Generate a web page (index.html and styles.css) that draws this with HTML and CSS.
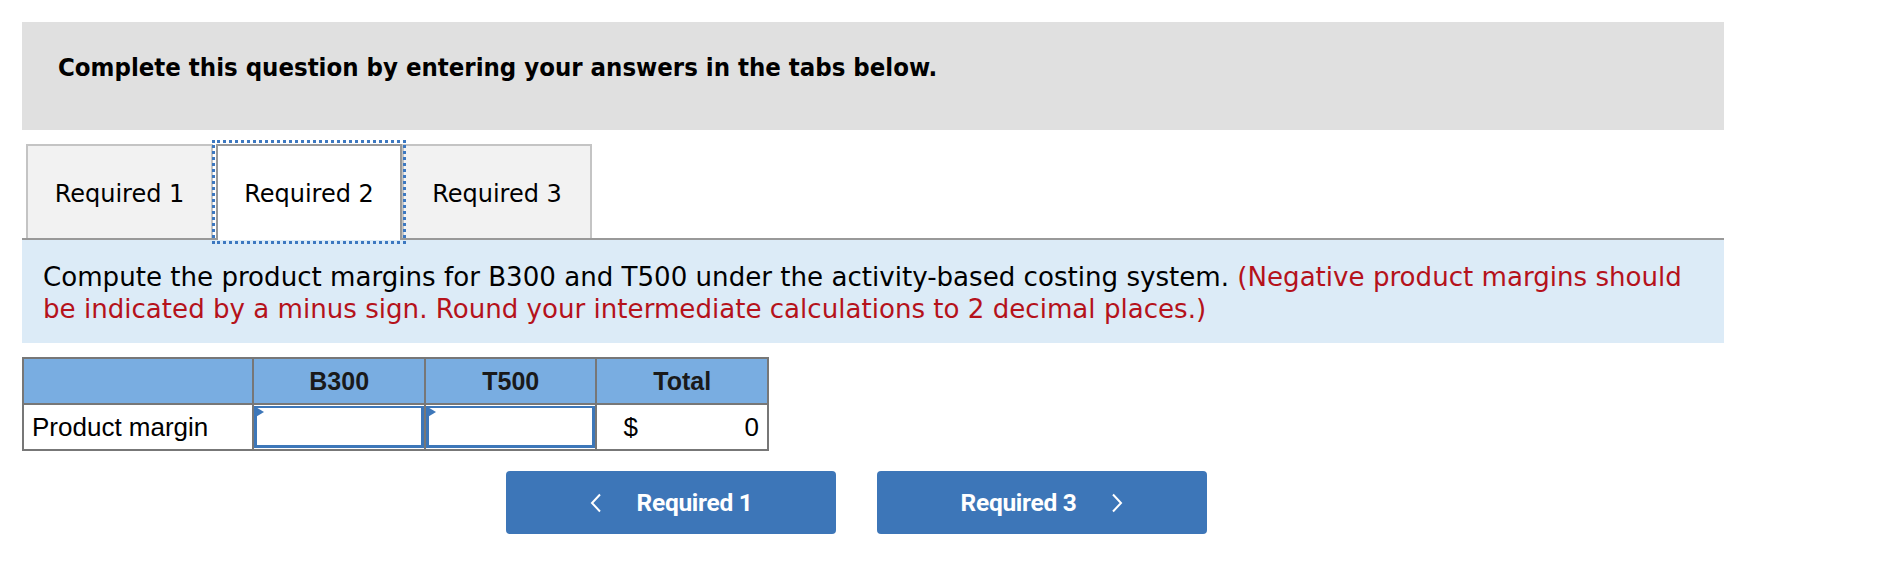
FILE: index.html
```html
<!DOCTYPE html>
<html lang="en">
<head>
<meta charset="utf-8">
<title>Required 2</title>
<link rel="stylesheet" href="styles.css">
</head>
<body>
<div class="wrap">
  <div class="banner">
    <h1 class="banner-title">Complete this question by entering your answers in the tabs below.</h1>
  </div>

  <div class="tabs">
    <div class="tab">Required 1</div>
    <div class="tab tab-active">Required 2</div>
    <div class="tab tab-last">Required 3</div>
  </div>

  <div class="prompt">
    <p class="prompt-text">Compute the product margins for B300 and T500 under the activity-based costing system. <span class="note">(Negative product margins should be indicated by a minus sign. Round your intermediate calculations to 2 decimal places.)</span></p>
  </div>

  <table class="grid">
    <thead>
      <tr>
        <th class="col-label"></th>
        <th class="col-val">B300</th>
        <th class="col-val">T500</th>
        <th class="col-val">Total</th>
      </tr>
    </thead>
    <tbody>
      <tr>
        <td class="row-label">Product margin</td>
        <td class="cell-input"><div class="input"><span class="flag"></span></div></td>
        <td class="cell-input"><div class="input"><span class="flag"></span></div></td>
        <td class="cell-total"><span class="cur">$</span><span class="num">0</span></td>
      </tr>
    </tbody>
  </table>

  <div class="nav">
    <button class="nav-btn">
      <svg class="chev" width="12" height="20" viewBox="0 0 12 20"><polyline points="10,1.5 2,10 10,18.5" fill="none" stroke="#fff" stroke-width="2"/></svg>
      <span class="nav-label">Required 1</span>
    </button>
    <button class="nav-btn">
      <span class="nav-label">Required 3</span>
      <svg class="chev" width="12" height="20" viewBox="0 0 12 20"><polyline points="2,1.5 10,10 2,18.5" fill="none" stroke="#fff" stroke-width="2"/></svg>
    </button>
  </div>
</div>
</body>
</html>
```

FILE: styles.css
```css
* { box-sizing: border-box; }

html, body {
  margin: 0;
  padding: 0;
  background: #ffffff;
}

.wrap {
  margin: 22px 0 0 22px;
  width: 1702px;
}

.banner {
  height: 108px;
  background: #e0e0e0;
  padding: 30px 0 0 36px;
}

.banner-title {
  margin: 0;
  font-family: "DejaVu Sans Condensed", "DejaVu Sans", sans-serif;
  font-weight: bold;
  font-size: 25.5px;
  line-height: 30px;
  color: #000;
}

.tabs {
  margin-top: 14px;
  display: flex;
  padding-left: 4px;
  border-bottom: 2px solid #999999;
  height: 96px;
}

.tab {
  width: 187px;
  height: 94px;
  background: #f2f2f2;
  border: 2px solid #c4c4c4;
  border-bottom: none;
  display: flex;
  align-items: center;
  justify-content: center;
  font-family: "DejaVu Sans", sans-serif;
  font-size: 24px;
  color: #000;
  padding-top: 3px;
}

.tab-last {
  width: 190px;
}

.tab-active {
  width: 186px;
  height: 96px;
  margin-left: 3px;
  background: #ffffff;
  border: 2px solid #999999;
  border-bottom: none;
  outline: 3px dotted #3d78c0;
  outline-offset: 1px;
  padding-top: 1px;
  padding-bottom: 0;
  position: relative;
  z-index: 1;
}

.prompt {
  background: #dcebf7;
  height: 103px;
  padding: 21px 14px 0 21px;
}

.prompt-text {
  margin: 0;
  font-family: "DejaVu Sans", sans-serif;
  font-size: 26.1px;
  line-height: 32px;
  color: #000;
}

.note {
  color: #b5121b;
}

.grid {
  margin-top: 14px;
  border-collapse: collapse;
  width: 747px;
  font-family: "Liberation Sans", Arial, sans-serif;
}

.grid th, .grid td {
  border: 2px solid #777777;
  height: 46px;
  padding: 0;
}

.grid th {
  background: #79ade1;
  font-weight: bold;
  font-size: 25px;
  color: #1a1a1a;
  text-align: center;
}

.col-label { width: 231px; }
.col-val { width: 172px; }

.row-label {
  font-size: 26px;
  color: #000;
  padding-left: 8px !important;
}

.cell-input {
  position: relative;
}

.input {
  height: 42px;
  border: 3px solid #3d77b9;
  border-top-width: 2px;
  background: #fff;
  position: relative;
}

.flag {
  position: absolute;
  left: -3px;
  top: -2px;
  width: 0;
  height: 0;
  border-top: 6px solid transparent;
  border-bottom: 6px solid transparent;
  border-left: 10px solid #3d77b9;
}

.cell-total {
  font-size: 26px;
  color: #000;
  padding: 0 8px 0 26px !important;
}

.cell-total .cur { float: left; }
.cell-total .num { float: right; }

.nav {
  margin-top: 20px;
  margin-left: 484px;
  display: flex;
  gap: 41px;
}

.nav-btn {
  width: 330px;
  height: 63px;
  border: none;
  border-radius: 4px;
  background: #3d76b8;
  color: #fff;
  display: flex;
  align-items: center;
  justify-content: center;
  gap: 35px;
  font-family: Roboto, "Liberation Sans", sans-serif;
  font-weight: bold;
  font-size: 24.5px;
  letter-spacing: -0.3px;
  padding: 0;
}

.chev { display: block; }
```
